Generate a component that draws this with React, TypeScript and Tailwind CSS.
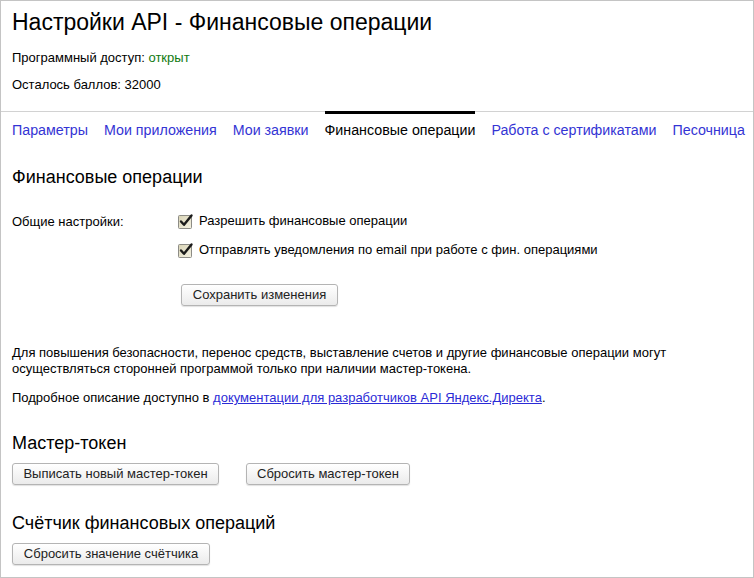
import React from "react";

const Btn = ({ children, w }: { children: React.ReactNode; w: string }) => (
  <button
    className={`h-[22px] ${w} rounded-[3px] border border-[#b4b4b4] bg-gradient-to-b from-white to-[#ebebeb] text-[13px] leading-[16px] text-[#222] shadow-[0_1px_1px_rgba(0,0,0,0.12)] flex items-center justify-center`}
  >
    {children}
  </button>
);

const Check = () => (
  <svg width="16" height="16" viewBox="0 0 16 16" className="shrink-0 overflow-visible">
    <defs>
      <linearGradient id="cbg" x1="0" y1="0" x2="1" y2="1">
        <stop offset="0" stopColor="#d9d4b6" />
        <stop offset="1" stopColor="#f4f1e2" />
      </linearGradient>
    </defs>
    <rect x="0.5" y="2.5" width="13" height="13" rx="1" fill="url(#cbg)" stroke="#8d8c86" />
    <path d="M3 8.5 L6 11.8 L13.5 2.5" fill="none" stroke="#1b1b1b" strokeWidth="2.4" strokeLinecap="round" strokeLinejoin="round" />
  </svg>
);

export default function App() {
  const tabs = [
    "Параметры",
    "Мои приложения",
    "Мои заявки",
    "Финансовые операции",
    "Работа с сертификатами",
    "Песочница",
  ];
  return (
    <div
      className="w-[754px] h-[578px] box-border border border-[#c4c4c4] bg-white text-black overflow-hidden"
      style={{ fontFamily: '"Liberation Sans", Arial, sans-serif' }}
    >
      <div className="border-b border-[#d2d2d2] px-[11px] pt-[7px] pb-[18px]">
        <h1 className="text-[23px] leading-[28px]">Настройки API - Финансовые операции</h1>
        <div className="mt-[14px] text-[13px] leading-[16px]">
          Программный доступ: <span className="text-[#117a11]">открыт</span>
        </div>
        <div className="mt-[11px] text-[13px] leading-[16px]">Осталось баллов: 32000</div>
      </div>

      <div className="px-[11px]">
        <div className="-mt-px flex gap-[16px] text-[14.25px] leading-[16px]">
          {tabs.map((t, i) => (
            <div
              key={t}
              className={`whitespace-nowrap border-t-[3px] pt-[8px] ${
                i === 3 ? "border-black text-black" : "border-transparent text-[#3434d4]"
              }`}
            >
              {t}
            </div>
          ))}
        </div>

        <h2 className="mt-[28px] text-[18px] leading-[22px]">Финансовые операции</h2>

        <div className="mt-[25px] flex text-[13px] leading-[16px]">
          <div className="w-[166px] shrink-0 pt-[0.5px]">Общие настройки:</div>
          <div className="flex flex-col">
            <div className="flex items-center gap-[5px] h-[16px]">
              <Check />
              <span>Разрешить финансовые операции</span>
            </div>
            <div className="mt-[13px] flex items-center gap-[5px] h-[16px]">
              <Check />
              <span>Отправлять уведомления по email при работе с фин. операциями</span>
            </div>
            <div className="mt-[26px] ml-[3px]">
              <Btn w="w-[157px]">Сохранить изменения</Btn>
            </div>
          </div>
        </div>

        <p className="mt-[39px] text-[13px] leading-[16px] whitespace-nowrap">
          Для повышения безопасности, перенос средств, выставление счетов и другие финансовые операции могут
          <br />
          осуществляться сторонней программой только при наличии мастер-токена.
        </p>
        <p className="mt-[13px] text-[13px] leading-[16px]">
          Подробное описание доступно в{" "}
          <a className="text-[#2b2bd6] underline">документации для разработчиков API Яндекс.Директа</a>.
        </p>

        <h2 className="mt-[26px] text-[18px] leading-[22px]">Мастер-токен</h2>
        <div className="mt-[9px] flex gap-[27px]">
          <Btn w="w-[207px]">Выписать новый мастер-токен</Btn>
          <Btn w="w-[164px]">Сбросить мастер-токен</Btn>
        </div>

        <h2 className="mt-[27px] text-[18px] leading-[22px]">Счётчик финансовых операций</h2>
        <div className="mt-[9px] flex">
          <Btn w="w-[198px]">Сбросить значение счётчика</Btn>
        </div>
      </div>
    </div>
  );
}
